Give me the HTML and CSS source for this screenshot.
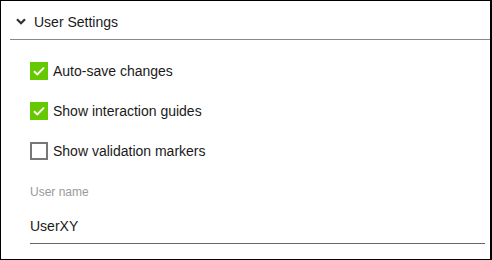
FILE: index.html
```html
<!DOCTYPE html>
<html>
<head>
<meta charset="utf-8">
<link rel="stylesheet" href="styles.css">
</head>
<body>
<div class="panel">
  <div class="header">
    <svg class="chevron" width="10" height="7" viewBox="0 0 10 7"><path d="M1 1.2 L5 5.2 L9 1.2" fill="none" stroke="#333" stroke-width="2.3"/></svg>
    <span class="title">User Settings</span>
  </div>
  <div class="content">
    <div class="row">
      <span class="box checked"><svg width="18" height="18" viewBox="0 0 18 18"><path d="M4 9.2 L7.3 12.4 L14 5.6" fill="none" stroke="#fff" stroke-width="2"/></svg></span>
      <span class="label">Auto-save changes</span>
    </div>
    <div class="row">
      <span class="box checked"><svg width="18" height="18" viewBox="0 0 18 18"><path d="M4 9.2 L7.3 12.4 L14 5.6" fill="none" stroke="#fff" stroke-width="2"/></svg></span>
      <span class="label">Show interaction guides</span>
    </div>
    <div class="row">
      <span class="box"></span>
      <span class="label">Show validation markers</span>
    </div>
    <div class="field">
      <div class="field-label">User name</div>
      <input class="field-input" type="text" value="UserXY">
    </div>
  </div>
</div>
</body>
</html>
```

FILE: styles.css
```css
html, body {
  margin: 0;
  padding: 0;
  background: #fff;
}
body {
  font-family: "Liberation Sans", Arial, sans-serif;
  color: #1a1a1a;
}
.panel {
  box-sizing: border-box;
  width: 492px;
  height: 260px;
  border: 1px solid #000;
  border-right-width: 2px;
}
.header {
  margin-left: 9px;
  height: 38px;
  border-bottom: 1px solid #888;
  display: flex;
  align-items: center;
  padding-left: 6px;
}
.chevron {
  display: block;
  margin-right: 8px;
  margin-top: 2px;
}
.title {
  font-size: 14px;
  color: #1a1a1a;
  margin-top: 3px;
}
.content {
  padding: 11px 0 0 29px;
}
.row {
  height: 40px;
  display: flex;
  align-items: center;
}
.box {
  box-sizing: border-box;
  width: 18px;
  height: 18px;
  border: 2px solid #777;
  background: #fff;
  margin-right: 5px;
  flex: none;
}
.box.checked {
  border: none;
  background: #66c800;
}
.box svg {
  display: block;
}
.label {
  font-size: 14px;
}
.field {
  margin-top: 13px;
}
.field-label {
  font-size: 12px;
  line-height: 16px;
  color: #9a9a9a;
}
.field-input {
  display: block;
  box-sizing: border-box;
  width: 455px;
  height: 44px;
  padding: 9px 0 0 0;
  margin: 0;
  border: none;
  border-bottom: 1px solid #666;
  font-family: "Liberation Sans", Arial, sans-serif;
  font-size: 14px;
  color: #1a1a1a;
  background: transparent;
  outline: none;
}
```
